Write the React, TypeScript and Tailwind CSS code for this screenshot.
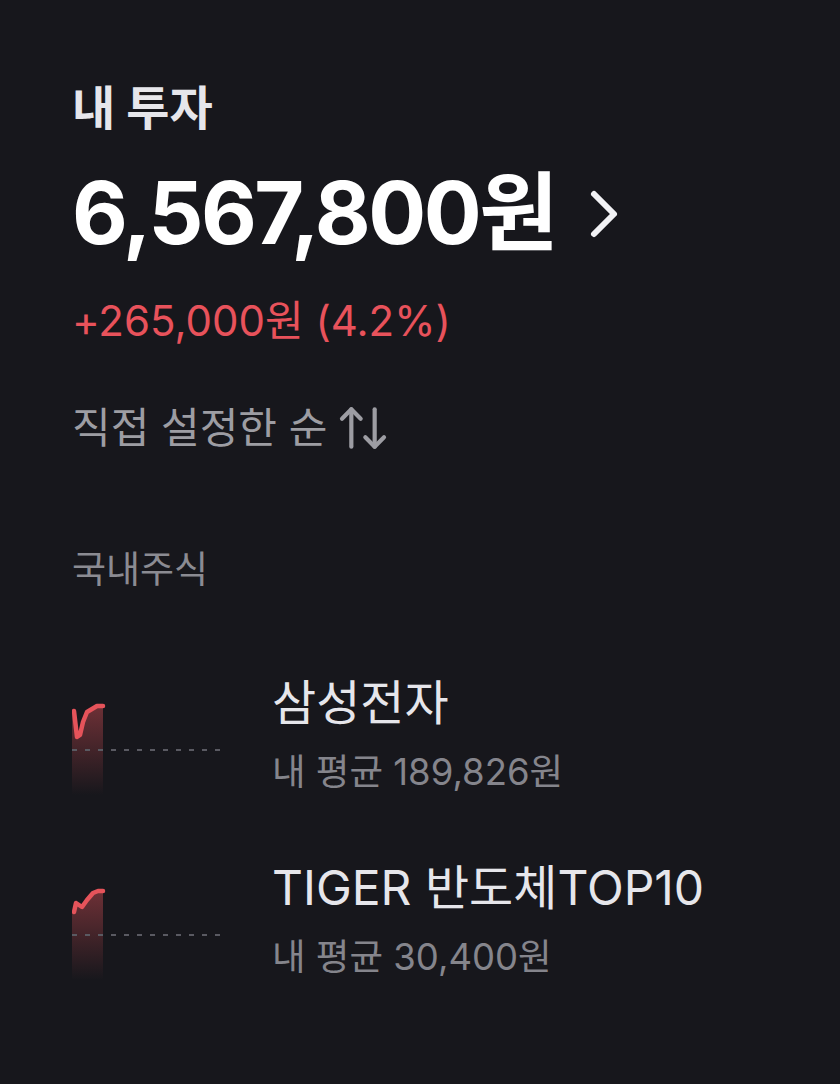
import { ArrowUpDown } from "lucide-react";

const FONT = "font-['Inter','Noto_Sans_CJK_KR',sans-serif]";

type Holding = {
  name: string;
  avg: string;
  line: string;
};

const holdings: Holding[] = [
  {
    name: "삼성전자",
    avg: "내 평균 189,826원",
    line: "M2 16 L5 42 L8 40 L11 27 L15 17 L20 14 L25 11 L31 11",
  },
  {
    name: "TIGER 반도체TOP10",
    avg: "내 평균 30,400원",
    line: "M2 32 L4 23 L10 27 L15 20 L21 13 L26 11 L31 11",
  },
];

function Sparkline({ line, id }: { line: string; id: string }) {
  const area = `${line} L31 100 L0 100 L0 ${line.split(" ")[1]} Z`;
  return (
    <svg width="150" height="100" viewBox="0 0 150 100" className="shrink-0">
      <defs>
        <linearGradient id={id} x1="0" y1="0" x2="0" y2="1">
          <stop offset="0%" stopColor="#e5535a" stopOpacity="0.42" />
          <stop offset="100%" stopColor="#e5535a" stopOpacity="0" />
        </linearGradient>
      </defs>
      <path d={area} fill={`url(#${id})`} />
      <line x1="0" y1="55" x2="150" y2="55" stroke="#5a5a62" strokeWidth="2" strokeDasharray="5 8" />
      <path d={line} fill="none" stroke="#e5535a" strokeWidth="4.5" strokeLinecap="round" strokeLinejoin="round" />
    </svg>
  );
}

export default function App() {
  return (
    <div className={`min-h-screen w-full bg-[#17171c] pl-[72px] pt-[84px] ${FONT}`}>
      {/* Summary */}
      <h1 className="text-[47px] leading-none font-bold text-[#e6e6eb]">내 투자</h1>

      <div className="mt-[39px] flex items-center">
        <span className="text-[86px] leading-none font-bold tracking-[-2.5px] text-white">6,567,800원</span>
        <svg width="32" height="52" viewBox="0 0 32 52" className="ml-[32px] mt-[2px]">
          <path d="M6 6 L26 26 L6 46" fill="none" stroke="#f2f2f5" strokeWidth="6" strokeLinecap="round" strokeLinejoin="round" />
        </svg>
      </div>

      <div className="mt-[44px] text-[42px] leading-none text-[#e8525b]">+265,000원 (4.2%)</div>

      <div className="mt-[65px] flex items-center gap-[8px] text-[42px] leading-none text-[#9d9da3]">
        <span>직접 설정한 순</span>
        <ArrowUpDown size={56} strokeWidth={1.8} className="-my-[7px]" />
      </div>

      {/* Holdings */}
      <div className="mt-[102px] text-[37px] leading-none text-[#8b8b92]">국내주식</div>

      <div className="mt-[91px] flex flex-col">
        {holdings.map((h, i) => (
          <div key={h.name} className="flex h-[185px] items-start gap-[50px]">
            <div className="mt-[16px]">
              <Sparkline line={h.line} id={`spark-${i}`} />
            </div>
            <div className="flex flex-col">
              <span className="text-[48px] leading-none text-[#e6e6eb]">{h.name}</span>
              <span className="mt-[27px] text-[36.5px] leading-none text-[#85858c]">{h.avg}</span>
            </div>
          </div>
        ))}
      </div>
    </div>
  );
}
